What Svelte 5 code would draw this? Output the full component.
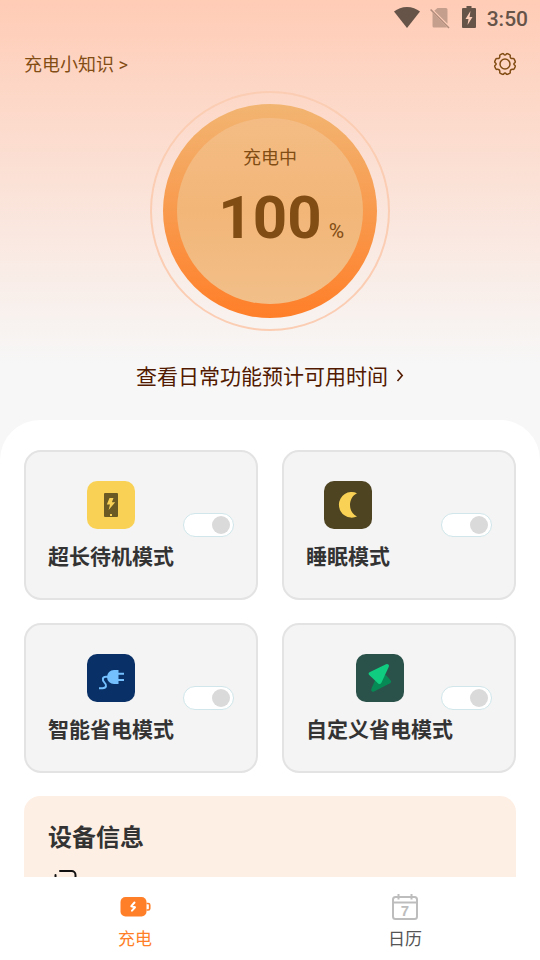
<script>
  const modes = $state([
    { id: 'standby', label: '超长待机模式', on: false },
    { id: 'sleep', label: '睡眠模式', on: false },
    { id: 'smart', label: '智能省电模式', on: false },
    { id: 'custom', label: '自定义省电模式', on: false }
  ]);
  let level = $state(100);
</script>

<div class="app">
  <main>
    <section class="hero">
      <div class="status">
        <svg width="26" height="22" viewBox="0 0 26 22"><path d="M13 21 0 4.600C3.500 1.800 8 0 13 0s9.500 1.800 13 4.600z" fill="currentColor" /></svg>
        <svg class="sim" width="20" height="22" viewBox="0 0 20 22">
          <path d="M7.500 1H16a1.500 1.500 0 0 1 1.500 1.500v14.200L4.300 3.700zM2.500 5.500 17 20.200a1.500 1.500 0 0 1-1 .4H4a1.500 1.500 0 0 1-1.500-1.500z" fill="#c59f8e" />
          <path d="M.6 2.500 19 21" stroke="#b18d7d" stroke-width="1.600" />
        </svg>
        <svg class="cell" width="14" height="22" viewBox="0 0 14 22"><path fill="currentColor" fill-rule="evenodd" d="M4.500 0h5v2H13a1 1 0 0 1 1 1v18a1 1 0 0 1-1 1H1a1 1 0 0 1-1-1V3a1 1 0 0 1 1-1h3.500zM8.500 5 3.500 13H6.500L5.500 19 10.500 11H7.500z" /></svg>
        <time>3:50</time>
      </div>

      <header>
        <a class="tips" href="#tips">充电小知识 &gt;</a>
        <button class="gear" aria-label="设置">
          <svg width="24" height="24" viewBox="0 0 24 24" fill="none" stroke="currentColor" stroke-width="1.500" stroke-linejoin="round">
            <path d="M9.300 1.800Q10.300 1.200 10.800 2.200Q12 3.800 13.200 2.200Q13.700 1.200 14.700 1.800L16.600 2.600Q17.500 3 17.200 4Q16.900 6.600 19.500 6.600Q20.900 6.400 21.300 7.300L22.200 9.400Q22.500 10.300 21.700 10.800Q20 12 21.700 13.200Q22.500 13.700 22.200 14.600L21.300 16.700Q20.900 17.600 19.900 17.300Q17 17.100 17.200 20Q17.500 21 16.600 21.400L14.700 22.200Q13.700 22.800 13.200 21.800Q12 20.200 10.800 21.800Q10.300 22.800 9.300 22.200L7.400 21.400Q6.500 21 6.800 20Q7 17.100 4.100 17.300Q3.100 17.600 2.700 16.700L1.800 14.600Q1.500 13.700 2.300 13.200Q4 12 2.300 10.800Q1.500 10.300 1.800 9.400L2.700 7.300Q3.100 6.400 4.500 6.600Q7.100 6.600 6.800 4Q6.500 3 7.400 2.600Z" />
            <circle cx="12" cy="12" r="5" />
          </svg>
        </button>
      </header>

      <div class="halo">
        <div class="ring">
          <div class="disc">
            <span class="state">充电中</span>
            <p class="level"><strong>{level}</strong><span>%</span></p>
          </div>
        </div>
      </div>

      <a class="estimate" href="#estimate">
        查看日常功能预计可用时间
        <svg width="8" height="16" viewBox="0 0 8 16" fill="none" stroke="currentColor" stroke-width="1.600"><path d="M1.500 1 6.200 6.500l-4.700 5.500" /></svg>
      </a>
    </section>

    <section class="sheet">
      <div class="modes">
        {#each modes as mode (mode.id)}
          <div class="card">
            <label class="name" for={mode.id}>
              <svg class={mode.id} width="48" height="48" viewBox="0 0 48 48">
                {#if mode.id === 'standby'}
                  <rect x="17" y="12" width="14" height="24" rx="1" fill="#6b5a24" />
                  <path d="M22.500 17h4l-1.600 4.300h3.300L21.600 29l1.400-5.500h-3.200z" fill="#f9d255" />
                  <rect x="23" y="33" width="2" height="2" fill="#f9d255" />
                {:else if mode.id === 'sleep'}
                  <path d="M33 12.200A12.800 12.800 0 1 0 33 35.500C28.500 33.600 26 29 26 24s2.500-9.800 7-11.800z" fill="#f9d255" />
                {:else if mode.id === 'smart'}
                  <path d="M12 34.200h3.500c4.200 0 4.300-3.300 2.200-5.300-3-3-2.300-6.200 1.300-6.200h3" fill="none" stroke="#74c0ff" stroke-width="2" />
                  <path d="M31.500 16v14H27a7 7 0 0 1 0-14zM31 18.800h6v2h-6zM31 25h6v2h-6z" fill="#74c0ff" />
                {:else}
                  <path d="m30 21 4.700 5.500a1.800 1.800 0 0 1-.6 2.700L18 37.500a2 2 0 0 1-2.700-2.500L20 24z" fill="#078955" />
                  <path d="M13.500 18.200 30 10.200a2 2 0 0 1 2.800 2.600l-7.400 16a2 2 0 0 1-3.200.6l-9-8.300a1.800 1.800 0 0 1 .3-2.900z" fill="#10cc80" />
                {/if}
              </svg>
              <span>{mode.label}</span>
            </label>
            <input id={mode.id} type="checkbox" role="switch" bind:checked={mode.on} />
          </div>
        {/each}
      </div>

      <section class="info">
        <h2>设备信息</h2>
        <svg width="32" height="32" viewBox="0 0 32 32" fill="none" stroke="#111" stroke-width="2" stroke-linecap="round">
          <path d="M12 3h11.500a4 4 0 0 1 4 4v15M7.500 7v14a4 4 0 0 0 4 4H23" />
        </svg>
      </section>
    </section>
  </main>

  <nav>
    <a class="active" href="#charge">
      <svg width="32" height="28" viewBox="0 0 32 28">
        <rect x="1.500" y="4" width="26" height="19.500" rx="5" fill="currentColor" />
        <path d="M27.500 10.500h1.700a1.500 1.500 0 0 1 1.500 1.500v3.500a1.500 1.500 0 0 1-1.500 1.500h-1.700" fill="none" stroke="currentColor" stroke-width="1.700" />
        <path d="m15.500 9.500-3.200 3.700 3.700 1.100-3 3.400" fill="none" stroke="#fff" stroke-width="2" stroke-linecap="round" stroke-linejoin="round" />
      </svg>
      <span>充电</span>
    </a>
    <a href="#calendar">
      <svg width="28" height="28" viewBox="0 0 28 28" fill="none" stroke="#bdbdbd" stroke-width="2">
        <rect x="2" y="4" width="24" height="22" rx="2.500" />
        <path d="M2 9.500h24M7.500 1v5.500M20.500 1v5.500" />
        <text class="day" x="14" y="23" text-anchor="middle">7</text>
      </svg>
      <span>日历</span>
    </a>
  </nav>
</div>

<style>
  :global(body) {
    margin: 0;
  }

  .app {
    display: flex;
    flex-direction: column;
    height: 100vh;
    background: #fff;
    color: #333;
    font-family: Roboto, 'Noto Sans CJK SC', sans-serif;
  }

  a {
    color: inherit;
    text-decoration: none;
  }

  svg {
    display: block;
    flex: none;
  }

  main {
    flex: 1;
    min-height: 0;
    overflow-y: auto;
    scrollbar-width: none;
    background: linear-gradient(#ffccb6, #f7f7f7 364px);
  }

  .hero {
    display: flex;
    flex-direction: column;
  }

  .status {
    display: flex;
    justify-content: flex-end;
    align-items: center;
    gap: 10px;
    height: 36px;
    padding: 0 12px;
    color: #665449;
  }

  .cell {
    margin: 0 1px 2px 2px;
  }

  .status time {
    font-size: 21px;
    font-weight: 500;
    line-height: 24px;
    padding-top: 2px;
  }

  header {
    display: flex;
    justify-content: space-between;
    align-items: center;
    height: 55px;
    padding: 0 23px 0 24px;
    color: #824d14;
  }

  .tips {
    padding-top: 2px;
    font-size: 18px;
    line-height: 24px;
  }

  .gear {
    padding: 0;
    border: 0;
    background: none;
    color: inherit;
  }

  .halo {
    display: grid;
    place-items: center;
    align-self: center;
    box-sizing: border-box;
    width: 240px;
    height: 240px;
    border: 2px solid #fbcdb3;
    border-radius: 50%;
  }

  .ring {
    display: grid;
    place-items: center;
    width: 214px;
    height: 214px;
    border-radius: 50%;
    background: linear-gradient(#f2b572, #ff7f29);
  }

  .disc {
    display: flex;
    flex-direction: column;
    align-items: center;
    box-sizing: border-box;
    width: 186px;
    height: 186px;
    padding-top: 28px;
    border-radius: 50%;
    background: linear-gradient(#f4bc84, #f2b678 50%, #f2bf89);
    color: #824d14;
  }

  .state {
    font-size: 18px;
    line-height: 24px;
  }

  .level {
    display: grid;
    grid-template-columns: 1fr auto 1fr;
    align-items: baseline;
    column-gap: 7px;
    align-self: stretch;
    margin: 12px 0 0;
    line-height: 72px;
  }

  .level strong {
    grid-column: 2;
    font-size: 60px;
    font-weight: 700;
  }

  .level span {
    font-size: 21px;
  }

  .estimate {
    display: flex;
    align-items: center;
    align-self: center;
    gap: 8px;
    padding: 30px 0 27px;
    color: #521a00;
    font-size: 21px;
    line-height: 32px;
  }

  .sheet {
    padding: 30px 24px 24px;
    border-radius: 40px 40px 0 0;
    background: #fff;
  }

  .modes {
    display: grid;
    grid-template-columns: 1fr 1fr;
    gap: 23px 24px;
  }

  .card {
    display: grid;
    align-items: center;
    padding: 29px 22px 25px;
    border: 2px solid #e3e3e3;
    border-radius: 17px;
    background: #f4f4f4;
  }

  .name {
    display: flex;
    flex-direction: column;
    align-items: center;
    gap: 12px;
    grid-area: 1 / 1;
    justify-self: start;
    font-size: 21px;
    font-weight: 700;
    line-height: 32px;
    white-space: nowrap;
  }

  .name svg {
    border-radius: 10px;
  }

  .standby {
    background: #f9d255;
  }

  .sleep {
    background: #4e4422;
  }

  .smart {
    background: #0a3167;
  }

  .custom {
    background: #2b524a;
  }

  .card input {
    display: flex;
    justify-content: flex-end;
    align-items: center;
    grid-area: 1 / 1;
    justify-self: end;
    appearance: none;
    box-sizing: border-box;
    width: 51px;
    height: 24px;
    margin: 0 0 4px;
    padding: 0 3px;
    border: 1px solid #d0e6ea;
    border-radius: 12px;
    background: #fff;
  }

  .card input::before {
    content: '';
    width: 18px;
    height: 18px;
    border-radius: 50%;
    background: #dadada;
  }

  .card input:checked::before {
    background: #ff7f29;
  }

  .info {
    min-height: 180px;
    margin-top: 23px;
    padding: 26px 24px 24px;
    border-radius: 16px;
    background: #feefe4;
  }

  h2 {
    margin: 0 0 14px;
    font-size: 24px;
    font-weight: 700;
    line-height: 32px;
  }

  nav {
    display: grid;
    grid-template-columns: 1fr 1fr;
    background: #fff;
    color: #555;
    font-size: 17px;
    line-height: 24px;
  }

  nav a {
    display: flex;
    flex-direction: column;
    align-items: center;
    gap: 6px;
    padding: 16px 0 9px;
  }

  .active {
    color: #ff7f29;
  }

  .day {
    fill: #bdbdbd;
    stroke: none;
    font: 700 15px 'Liberation Sans', sans-serif;
  }
</style>
